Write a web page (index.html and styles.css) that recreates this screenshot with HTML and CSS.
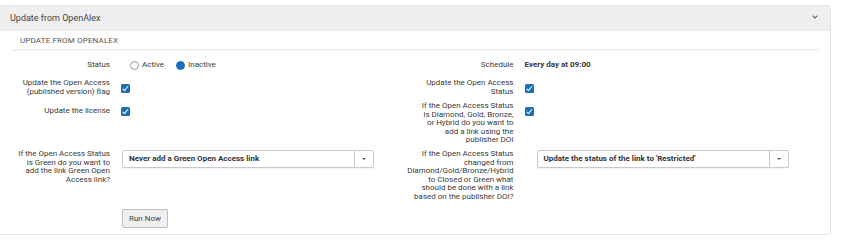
FILE: index.html
```html
<!DOCTYPE html>
<html lang="en">
<head>
    <meta charset="UTF-8">
    <meta name="viewport" content="width=device-width, initial-scale=1.0">
    <title>Update from OpenAlex</title>
    <link rel="stylesheet" href="styles.css">
</head>
<body>

<div class="page">
    <section class="panel">
        <!-- Collapsible header -->
        <header class="panel-header">
            <span>Update from OpenAlex</span>
            <svg class="chevron" width="6" height="4" viewBox="0 0 6 4">
                <path d="M0.6 0.6 L3 3 L5.4 0.6" fill="none" stroke="#666" stroke-width="1.2"/>
            </svg>
        </header>

        <div class="panel-body">
            <h3 class="section-title">Update from OpenAlex</h3>

            <div class="form-grid">
                <div class="field">
                    <span class="field-label">Status</span>
                    <div class="field-control radio-group">
                        <span class="radio"></span><span class="radio-text">Active</span>
                        <span class="radio is-checked"></span><span class="radio-text">Inactive</span>
                    </div>
                </div>
                <div class="field">
                    <span class="field-label">Schedule</span>
                    <div class="field-control">
                        <strong class="value">Every day at 09:00</strong>
                    </div>
                </div>

                <div class="field">
                    <span class="field-label">Update the Open Access (published version) flag</span>
                    <div class="field-control"><span class="checkbox is-checked"></span></div>
                </div>
                <div class="field">
                    <span class="field-label">Update the Open Access Status</span>
                    <div class="field-control"><span class="checkbox is-checked"></span></div>
                </div>

                <div class="field">
                    <span class="field-label">Update the license</span>
                    <div class="field-control"><span class="checkbox is-checked"></span></div>
                </div>
                <div class="field">
                    <span class="field-label">If the Open Access Status is Diamond, Gold, Bronze, or Hybrid do you want to add a link using the publisher DOI</span>
                    <div class="field-control"><span class="checkbox is-checked"></span></div>
                </div>

                <div class="field">
                    <span class="field-label">If the Open Access Status is Green do you want to add the link Green Open Access link?</span>
                    <div class="field-control">
                        <div class="select">
                            <span class="select-value">Never add a Green Open Access link</span>
                            <span class="select-arrow"></span>
                        </div>
                    </div>
                </div>
                <div class="field field--long">
                    <div class="field-label"><span class="label-text">If the Open Access Status changed from Diamond/Gold/Bronze/Hybrid to Closed or Green what should be done with a link based on the publisher DOI?</span></div>
                    <div class="field-control">
                        <div class="select">
                            <span class="select-value">Update the status of the link to 'Restricted'</span>
                            <span class="select-arrow"></span>
                        </div>
                    </div>
                </div>
            </div>

            <div class="actions">
                <button class="button">Run Now</button>
            </div>
        </div>
    </section>

    <div class="next-panel"></div>
</div>

</body>
</html>
```

FILE: styles.css
```css
/* General styles */
* {
    box-sizing: border-box;
    margin: 0;
    padding: 0;
}
body {
    font-family: Roboto, "Liberation Sans", Arial, sans-serif;
    font-size: 8px;
    line-height: 8.6px;
    color: #3a3a3a;
    background: #fff;
}
.page {
    padding: 5px 15px 0 0;
}

/* Panel */
.panel {
    border: 1px solid #e6e6e6;
    border-left: none;
    border-radius: 0 3px 3px 0;
}
.panel-header {
    display: flex;
    justify-content: space-between;
    align-items: center;
    height: 25px;
    padding: 0 12px 0 10px;
    background-color: #efefef;
    font-size: 9px;
    color: #444;
}
.chevron {
    margin-top: -4px;
}
.panel-body {
    padding: 0 11px 6px 12px;
}
.section-title {
    height: 20px;
    padding: 6px 0 0 8px;
    border-bottom: 2px solid #f1f1f1;
    font-size: 8px;
    font-weight: normal;
    letter-spacing: 0.15px;
    text-transform: uppercase;
    color: #555;
}

/* Form layout */
.form-grid {
    display: grid;
    grid-template-columns: 1fr 1fr;
    row-gap: 5px;
    padding-top: 5px;
}
.field {
    display: flex;
    align-items: flex-start;
}
.field-label {
    flex: 0 0 98px;
    min-height: 18px;
    display: flex;
    align-items: center;
    justify-content: flex-end;
    text-align: right;
}
.field-control {
    min-height: 18px;
    margin-left: 11px;
    display: flex;
    align-items: center;
}
/* long unbreakable words spill out to the left, not into the control */
.field--long .field-label {
    display: block;
    flex-basis: 104px;
    min-width: 0;
    margin-left: -6px;
    direction: rtl;
}
.field--long .label-text {
    direction: ltr;
    unicode-bidi: isolate;
}
.field--long .field-control {
    margin-left: 22px;
}
.value {
    font-weight: bold;
    color: #333;
}

/* Radio buttons */
.radio-group {
    padding-left: 9px;
}
.radio {
    width: 9px;
    height: 9px;
    border: 1px solid #999;
    border-radius: 50%;
    background: #fff;
}
.radio.is-checked {
    border-color: #1a6fb8;
    background: #1a6fb8;
}
.radio-text {
    margin: 0 12px 0 3px;
}

/* Checkboxes */
.checkbox {
    position: relative;
    width: 9px;
    height: 9px;
    border-radius: 1.5px;
    background: #1a6fb8;
}
.checkbox.is-checked::after {
    content: "";
    position: absolute;
    left: 3px;
    top: 1px;
    width: 2px;
    height: 4.5px;
    border: solid #fff;
    border-width: 0 1.3px 1.3px 0;
    transform: rotate(40deg);
}

/* Select boxes */
.select {
    display: flex;
    width: 252px;
    height: 18px;
    margin-left: 1px;
    border: 1px solid #c9c9c9;
    border-radius: 2px;
    background: #fff;
    box-shadow: 0 1px 1px rgba(0, 0, 0, 0.05);
}
.select-value {
    flex: 1;
    padding-left: 6px;
    display: flex;
    align-items: center;
    font-weight: bold;
    color: #333;
}
.select-arrow {
    position: relative;
    width: 19px;
    border-left: 1px solid #c9c9c9;
}
.select-arrow::after {
    content: "";
    position: absolute;
    left: 7px;
    top: 7px;
    border-left: 2px solid transparent;
    border-right: 2px solid transparent;
    border-top: 2px solid #555;
}

/* Run button */
.actions {
    padding: 7px 0 0 110px;
}
.button {
    height: 19px;
    padding: 0 6px;
    border: 1px solid #bdbdbd;
    border-radius: 2px;
    background-color: #efefef;
    font-family: inherit;
    font-size: 8px;
    color: #444;
    cursor: pointer;
}
.button:hover {
    background-color: #e4e4e4;
}

/* Start of the next panel */
.next-panel {
    margin: 11px -15px 0 0;
    border-top: 1px solid #e0e0e0;
}
```
